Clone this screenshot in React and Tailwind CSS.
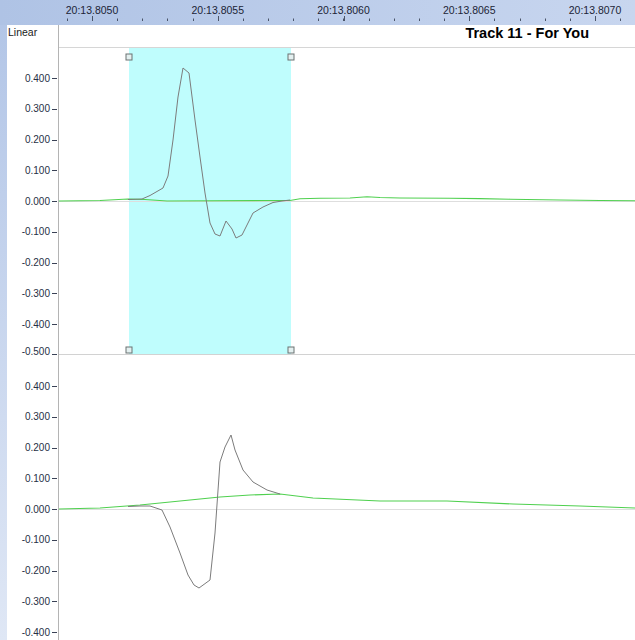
import React from "react";

const majors = [92, 217.75, 343.5, 469.25, 595];
const majorLabels = ["20:13.8050", "20:13.8055", "20:13.8060", "20:13.8065", "20:13.8070"];

const minors = [];
for (let x = 92 - 25.15; x < 635; x += 25.15) minors.push(x);

const topLabels = ["0.400", "0.300", "0.200", "0.100", "0.000", "-0.100", "-0.200", "-0.300", "-0.400"];
const topVals = [0.4, 0.3, 0.2, 0.1, 0, -0.1, -0.2, -0.3, -0.4];

const topGray =
  "128,199.5 142,199 150,195.5 163,188 168,176 173,140 178,97 183,68 189,73 195,120 200,157 205,193 210,223 215,234 220,236 226,221 232,229 236,238 242,235 247,225 253,213 263,207 273,202.5 282,201 290,200";
const topGreen =
  "59,201 100,200.5 128,199 145,199.5 167,201 290,200.5 300,198.8 320,198.3 350,198 367,196.8 380,197.5 400,198 450,198.2 480,198.6 510,199.2 560,200 600,200.5 635,200.8";
const bottomGray =
  "128,506.5 140,506 150,506 162,510 170,527 180,553 188,575 194,585 199,588 210,580 215,533 220,462 225,447 231,435 235,450 243,470 253,482 267,490 280,494";
const bottomGreen =
  "59,509 100,508 140,505 200,499 220,497 250,495 280,494 313,498 380,501 447,501 513,504 580,506 635,508";

function Ruler() {
  return (
    <div className="h-[25px] w-full bg-gradient-to-r from-[#afc3e5] to-[#c8d6ef]">
      <svg width="635" height="25" className="block">
        {minors
          .filter((x) => x > 58)
          .map((x, i) => (
            <line key={i} x1={Math.round(x) + 0.5} x2={Math.round(x) + 0.5} y1="18.5" y2="21" stroke="#4a5468" strokeWidth="1" />
          ))}
        {majors.map((x, i) => (
          <g key={i}>
            <line x1={Math.round(x) + 0.5} x2={Math.round(x) + 0.5} y1="16" y2="21" stroke="#4a5468" strokeWidth="1" />
            <text x={x} y="14" textAnchor="middle" fontSize="10.5" fill="#1c2436">
              {majorLabels[i]}
            </text>
          </g>
        ))}
      </svg>
    </div>
  );
}

function Axis({ top, height, zero, labels, vals, last }) {
  return (
    <div className="w-[52px] shrink-0 border-r border-[#b4b4b4]">
      <svg width="51" height={height} viewBox={`7 ${top} 51 ${height}`} className="block overflow-visible">
        {labels.map((l, i) => {
          const y = zero - vals[i] * 307.5;
          return (
            <g key={l}>
              <text x="50" y={y + 3.6} textAnchor="end" fontSize="10" fill="#263045">
                {l}
              </text>
              <line x1="52" x2="57" y1={Math.round(y) + 0.5} y2={Math.round(y) + 0.5} stroke="#3a4256" strokeWidth="1" />
            </g>
          );
        })}
        {last && (
          <g>
            <text x="50" y="354.5" textAnchor="end" fontSize="10" fill="#263045">
              {last}
            </text>
            <line x1="52" x2="57" y1="354.5" y2="354.5" stroke="#3a4256" strokeWidth="1" />
          </g>
        )}
      </svg>
    </div>
  );
}

function Handle({ x, y }) {
  return <rect x={x - 3} y={y - 3} width="6" height="6" fill="#e4f0f0" stroke="#6b7272" strokeWidth="1" />;
}

export default function App() {
  return (
    <div className="w-[635px] h-[640px] overflow-hidden flex flex-col bg-white font-['Liberation_Sans',Arial,sans-serif]">
      <Ruler />
      <div className="flex flex-1 min-h-0">
        <div className="w-[7px] shrink-0 bg-gradient-to-b from-[#b3c6e7] to-[#dfe7f5]" />
        <div className="flex-1 flex flex-col min-w-0">
          <div className="flex h-[23px] shrink-0">
            <div className="w-[52px] shrink-0 border-r border-[#b4b4b4] pl-[1px] pt-[1px] text-[10.5px] leading-none text-[#1a1a1a]">
              <span className="block pt-[1px]">Linear</span>
            </div>
            <div className="flex-1 flex justify-end border-b border-[#d6d6d6] pr-[46px] pt-[1px] text-[14.5px] font-bold leading-none text-black">
              <span className="block">Track 11 - For You</span>
            </div>
          </div>

          <div className="relative z-10 flex h-[306px] shrink-0">
            <Axis top={48} height={306} zero={201} labels={topLabels} vals={topVals} last="-0.500" />
            <div className="flex-1">
              <svg width="576" height="306" viewBox="59 48 576 306" className="block">
                <rect x="129" y="47" width="162" height="308" fill="#bffdfd" />
                <line x1="59" x2="635" y1="201.5" y2="201.5" stroke="#dedede" strokeWidth="1" />
                <polyline points={topGreen} fill="none" stroke="#4fd04f" strokeWidth="1.1" />
                <polyline points={topGray} fill="none" stroke="#7c7c7c" strokeWidth="1" />
                <Handle x={129} y={57} />
                <Handle x={291} y={57} />
                <Handle x={129} y={350} />
                <Handle x={291} y={350} />
              </svg>
            </div>
          </div>

          <div className="flex h-[1px] shrink-0">
            <div className="w-[52px] shrink-0 border-r border-[#b4b4b4]" />
            <div className="flex-1 bg-[#d2d2d2]" />
          </div>

          <div className="flex flex-1 min-h-0">
            <Axis top={355} height={285} zero={509} labels={topLabels} vals={topVals} />
            <div className="flex-1">
              <svg width="576" height="285" viewBox="59 355 576 285" className="block">
                <line x1="59" x2="635" y1="509.5" y2="509.5" stroke="#dedede" strokeWidth="1" />
                <polyline points={bottomGreen} fill="none" stroke="#4fd04f" strokeWidth="1.1" />
                <polyline points={bottomGray} fill="none" stroke="#7c7c7c" strokeWidth="1" />
              </svg>
            </div>
          </div>
        </div>
      </div>
    </div>
  );
}
